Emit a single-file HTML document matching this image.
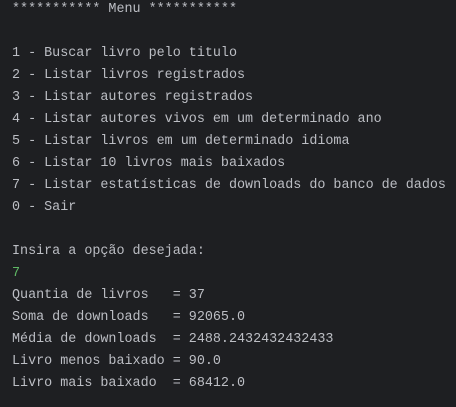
<!DOCTYPE html>
<html><head><meta charset="utf-8"><style>
html,body{margin:0;padding:0;width:456px;height:407px;background:#1e1f22;overflow:hidden}
pre{margin:0;position:absolute;left:12px;top:-1px;font-family:"Liberation Mono",monospace;font-size:13.4px;line-height:22px;color:#bcbec4}
.g{color:#5fb865}
</style></head><body><pre>*********** Menu ***********

1 - Buscar livro pelo titulo
2 - Listar livros registrados
3 - Listar autores registrados
4 - Listar autores vivos em um determinado ano
5 - Listar livros em um determinado idioma
6 - Listar 10 livros mais baixados
7 - Listar estatísticas de downloads do banco de dados
0 - Sair

Insira a opção desejada:
<span class="g">7</span>
Quantia de livros   = 37
Soma de downloads   = 92065.0
Média de downloads  = 2488.2432432432433
Livro menos baixado = 90.0
Livro mais baixado  = 68412.0</pre></body></html>
